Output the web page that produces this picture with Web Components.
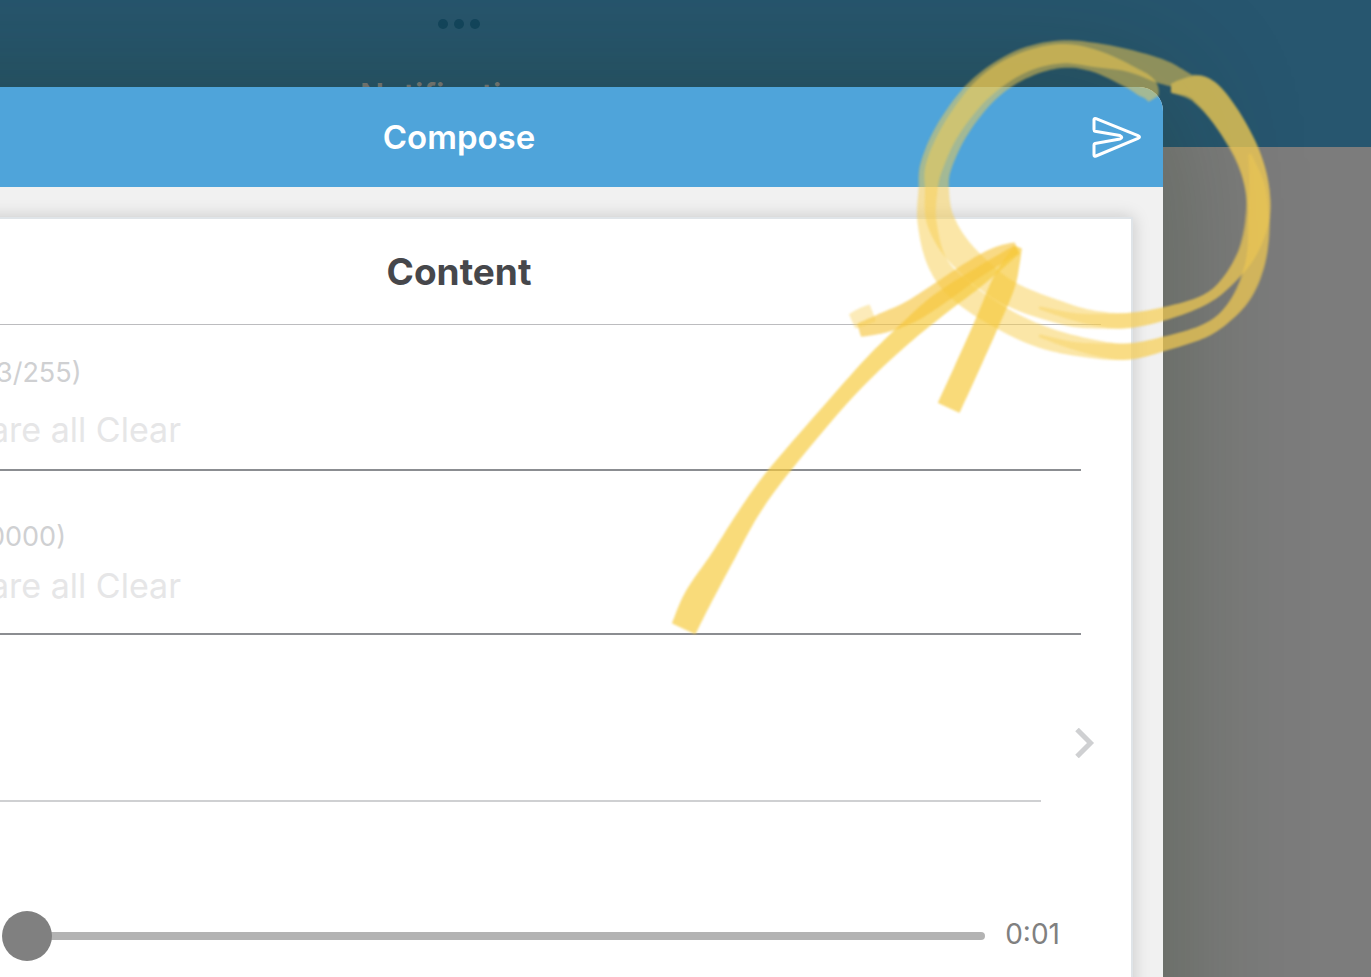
<!DOCTYPE html>
<html lang="en">
<head>
<meta charset="utf-8">
<title>Compose</title>
<style>
html, body { margin: 0; height: 100%; overflow: hidden; }
body { font-family: Inter, "Liberation Sans", sans-serif; }
</style>
</head>
<body>
<compose-screen>
  <app-background slot="background">Notifications</app-background>
  <compose-dialog slot="dialog" heading="Compose">
    <content-card heading="Content">
      <text-field label="3/255)" value="are all Clear" style="--space-top:28px;--gap:13px;--space-bottom:15px;--label-shift:-4px"></text-field>
      <text-field label="0000)" value="are all Clear" style="--space-top:46px;--gap:5px;--space-bottom:23px;--label-shift:-12px"></text-field>
      <nav-row></nav-row>
      <audio-scrubber time="0:01"></audio-scrubber>
    </content-card>
  </compose-dialog>
  <marker-drawing slot="marker"></marker-drawing>
</compose-screen>
<script>
const define = (name, html, setup) => customElements.define(name, class extends HTMLElement {
  constructor() {
    super();
    this.attachShadow({ mode: 'open' }).innerHTML = html;
  }
  connectedCallback() {
    if (setup) setup(this, this.shadowRoot);
  }
});

define('compose-screen', `
<style>
:host { display: grid; grid-template: minmax(100vh, auto) / 1fr; position: relative; height: 100vh; overflow: hidden; }
slot { display: contents; }
::slotted(*) { grid-area: 1 / 1; min-width: 0; }
</style>
<slot name="background"></slot><slot name="dialog"></slot><slot name="marker"></slot>`);

define('app-background', `
<style>
:host { display: block; background: #7c7c7c; }
header { box-sizing: border-box; height: 147px; padding: 14px 453px 0 0; background: #27566f; display: flex; flex-direction: column; align-items: center; gap: 42px; }
button { border: 0; background: none; padding: 5px 0; height: 20px; display: flex; gap: 6px; }
i { width: 10px; height: 10px; border-radius: 50%; background: #13465f; }
h1 { margin: 0; font-size: 32px; line-height: 40px; font-weight: 600; color: #7c7c7c; }
</style>
<header><button aria-label="More"><i></i><i></i><i></i></button><h1><slot></slot></h1></header>`);

define('compose-dialog', `
<style>
:host { display: flex; flex-direction: column; margin: 87px 208px -200px -200px; padding-left: 200px; background: #f1f1f1; border-radius: 0 24px 0 0; box-shadow: 0 0 140px rgba(28,50,15,.32); z-index: 1; }
header { height: 100px; background: #4fa4da; border-radius: 0 24px 0 0; display: grid; grid-template-columns: 1fr auto; align-items: center; padding: 0 20px 0 0; }
h2 { margin: 0 -52px 0 0; padding-right: 225px; text-align: center; color: #fff; font-size: 33px; line-height: 44px; font-weight: 600; grid-area: 1 / 1; }
button { border: 0; background: none; padding: 0; display: flex; grid-area: 1 / 2; }
main { flex: 1; display: grid; padding: 30px 30px 0 0; }
</style>
<header><h2></h2><button aria-label="Send">
<svg width="52" height="44" viewBox="0 0 52 44" fill="none" stroke="#fff" stroke-width="3" stroke-linejoin="round"><path d="M3 4.500Q3 3 5 3.600L47 20.600Q50 22 47 23.400L5 41Q3 41.600 3 40V30Q3 28.800 4 28.500L29 24Q32.500 22.300 29 20.600L4 16.200Q3 16 3 14.500Z"/></svg>
</button></header><main><slot></slot></main>`,
(el, root) => { root.querySelector('h2').textContent = el.getAttribute('heading'); });

define('content-card', `
<style>
:host { display: block; margin-left: -60px; padding-left: 60px; background: #fff; border: solid #dfe4e8; border-width: 2px 2px 0 0; box-shadow: 0 0 16px rgba(0,0,0,.18); }
h3 { margin: 0 30px 0 0; padding-right: 183px; height: 105px; display: grid; place-items: center; font-size: 37px; line-height: 48px; font-weight: 700; color: #46474b; border-bottom: 1px solid #bcbcbf; }
</style>
<h3></h3><slot></slot>`,
(el, root) => { root.querySelector('h3').textContent = el.getAttribute('heading'); });

define('text-field', `
<style>
:host { display: flex; flex-direction: column; gap: var(--gap); margin-right: 50px; padding: var(--space-top) 0 var(--space-bottom); border-bottom: 2px solid #8b8d91; }
label { font-size: 27px; line-height: 40px; color: #cfd0d2; margin-left: var(--label-shift); }
input { box-sizing: border-box; border: 0; outline: 0; background: none; padding: 0; margin-left: -10px; height: 48px; font: 34px/48px Inter, "Liberation Sans", sans-serif; color: #e6e6e7; }
</style>
<label for="field"></label><input id="field" type="text" readonly>`,
(el, root) => {
  root.querySelector('label').textContent = el.getAttribute('label');
  root.querySelector('input').value = el.getAttribute('value');
});

define('nav-row', `
<style>
:host { display: grid; grid-template-columns: 1fr 90px; height: 167px; }
span { border-bottom: 2px solid #cfd0d2; }
button { border: 0; background: none; padding: 93px 0 0 34px; display: flex; align-items: flex-start; }
</style>
<span></span><button aria-label="Open"><svg width="20" height="30" viewBox="0 0 20 30" fill="none" stroke="#cfd0d2" stroke-width="5"><path d="M2 1.500L15.500 15L2 28.500"/></svg></button>`);

define('audio-scrubber', `
<style>
:host { display: flex; align-items: center; gap: 20px; padding: 109px 71px 0 2px; }
input { appearance: none; flex: 1; min-width: 0; height: 50px; margin: 0; background: none; }
input::-webkit-slider-runnable-track { height: 8px; border-radius: 4px; background: linear-gradient(90deg, transparent 20px, #b3b3b3 20px); }
input::-webkit-slider-thumb { appearance: none; width: 50px; height: 50px; margin-top: -21px; border-radius: 50%; background: #808080; }
output { font-size: 28px; line-height: 40px; padding-bottom: 4px; color: #808080; }
</style>
<input id="position" type="range" min="0" max="100" value="0" aria-label="Playback position"><output for="position"></output>`,
(el, root) => { root.querySelector('output').textContent = el.getAttribute('time'); });

/* Brush strokes: every entry is x, y, width along the centre line. */
const ring = [
  [1153,98,10],[1147,88,20],[1130,77,20],[1095,61,20],[1060,56,22],[1020,67,24],[986,90,25],[957,127,24],[939,165,24],[937,190,22],[941,222,26],[963,256,26],[1007,292,23],[1065,314,20],[1100,320,15],[1133,320,13],[1167,313,11],[1202,301,8],[1224,285,9],[1246,255,16],[1257,220,22],[1257,187,22],[1246,151,23],[1223,113,26],[1200,90,26],[1172,88,8]];
const ringOuter = [
  [1196,86,12],[1178,78,18],[1160,71,22],[1130,61,20],[1095,55,22],[1060,52,21],[1020,62,22],[980,89,23],[949,128,22],[932,165,21],[928,190,17],[927,222,17],[937,262,18],[960,290,22],[1003,319,21],[1048,339,20],[1100,350,16],[1133,351,14],[1167,343,12],[1202,332,11],[1225,317,11],[1244,293,16],[1256,260,18],[1259,222,20],[1257,187,22],[1246,152,24],[1224,114,26],[1205,92,26],[1190,86,20],[1172,88,8]];
const innerTail = [[1040,308,1],[1075,317,6],[1110,321,12],[1133,320,13],[1167,313,11],[1202,301,8],[1224,285,9],[1246,255,14],[1257,220,18],[1257,187,14],[1250,155,1]];
const outerTail = [[1040,336,1],[1075,346,6],[1110,351,13],[1133,351,14],[1167,343,12],[1202,332,11],[1225,317,11],[1244,293,14],[1256,260,16],[1260,222,16],[1257,187,10],[1250,155,1]];
const shaft = [
  [684,628,24],[698,598,26],[721,560,21],[750,511,17],[779,471,16],[835,405,14],[873,364,16],[907,332,18],[940,304,20],[980,276,16],[1016,250,8]];
const head = [
  [860,330,12],[883,323,18],[910,312,20],[940,293,20],[973,270,18],[997,256,16],[1016,248,10]];
const barb = [
  [1018,248,6],[1012,262,14],[1003,285,22],[987,323,22],[966,370,22],[949,407,22]];
const blob = [[853,321,14],[862,317,16],[872,313,16]];

function brush(points) {
  const left = [], right = [];
  const at = i => points[Math.max(0, Math.min(points.length - 1, i))];
  for (let i = 0; i < points.length - 1; i++) {
    const [a, b, c, d] = [at(i - 1), at(i), at(i + 1), at(i + 2)];
    for (let s = 0; s <= 8; s++) {
      const t = s / 8;
      const p = k => (2*b[k] + (c[k]-a[k])*t + (2*a[k]-5*b[k]+4*c[k]-d[k])*t*t + (3*b[k]-a[k]-3*c[k]+d[k])*t*t*t) / 2;
      const v = k => (c[k]-a[k]) + 2*(2*a[k]-5*b[k]+4*c[k]-d[k])*t + 3*(3*b[k]-a[k]-3*c[k]+d[k])*t*t;
      const n = Math.hypot(v(0), v(1)) || 1, h = p(2) / 2;
      const ox = -v(1) / n * h, oy = v(0) / n * h;
      left.push([p(0) + ox, p(1) + oy]);
      right.unshift([p(0) - ox, p(1) - oy]);
    }
  }
  return 'M' + left.concat(right).map(q => q.map(z => z.toFixed(1)).join(' ')).join('L') + 'Z';
}

define('marker-drawing', `
<style>
:host { position: absolute; top: 0; right: 0; width: 1371px; height: 977px; pointer-events: none; z-index: 2; }
svg { display: block; width: 100%; height: 100%; filter: blur(1px); }
path { stroke-width: 2; stroke-linejoin: round; }
</style>
<svg viewBox="0 0 1371 977" aria-hidden="true"></svg>`,
(el, root) => {
  const pieces = [[[ring],'#f7ce50',.5],[[ringOuter],'#f7ce50',.5],[[innerTail, outerTail],'#f7ce50',.4],[[shaft],'#f6cb3c',.68],[[head],'#f5c43a',.62],[[barb],'#f6c93a',.68],[[blob],'#f7ce50',.4]];
  root.querySelector('svg').innerHTML = pieces.map(([strokes, color, alpha]) =>
    `<path d="${strokes.map(brush).join('')}" fill="${color}" stroke="${color}" opacity="${alpha}"/>`).join('');
});
</script>
</body>
</html>
